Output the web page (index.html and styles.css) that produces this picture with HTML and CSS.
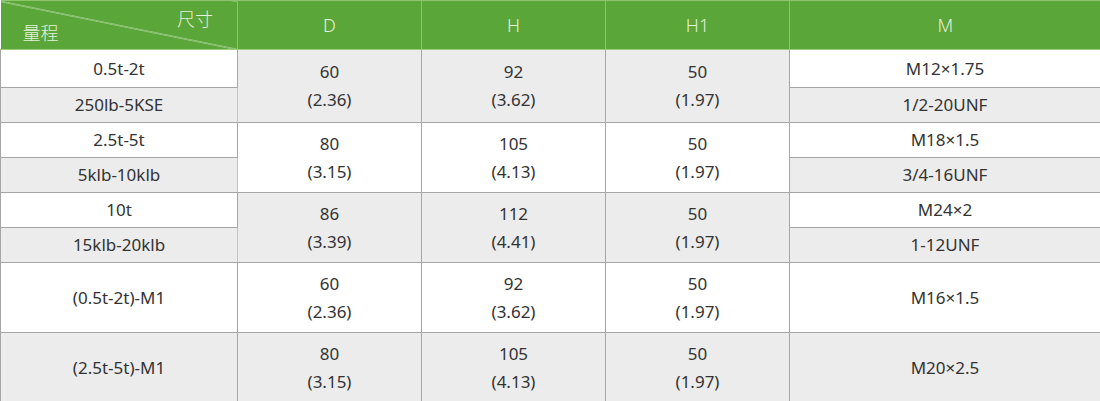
FILE: index.html
```html
<!DOCTYPE html>
<html lang="zh">
<head>
<meta charset="utf-8">
<title>尺寸表</title>
<link rel="stylesheet" href="styles.css">
</head>
<body>
<table class="spec">
  <colgroup>
    <col class="c-range">
    <col class="c-dim">
    <col class="c-dim">
    <col class="c-dim">
    <col class="c-m">
  </colgroup>
  <thead>
    <tr class="head">
      <th class="corner">
        <div class="corner-in">
          <span class="lbl-top">尺寸</span>
          <span class="lbl-bot">量程</span>
        </div>
      </th>
      <th>D</th>
      <th>H</th>
      <th>H1</th>
      <th>M</th>
    </tr>
  </thead>
  <tbody>
    <tr class="r-first">
      <td class="w">0.5t-2t</td>
      <td class="g two" rowspan="2">60<br>(2.36)</td>
      <td class="g two" rowspan="2">92<br>(3.62)</td>
      <td class="g two" rowspan="2">50<br>(1.97)</td>
      <td class="w">M12×1.75</td>
    </tr>
    <tr class="r-sub">
      <td class="g sub">250lb-5KSE</td>
      <td class="g sub">1/2-20UNF</td>
    </tr>
    <tr class="r-half">
      <td class="w">2.5t-5t</td>
      <td class="w two" rowspan="2">80<br>(3.15)</td>
      <td class="w two" rowspan="2">105<br>(4.13)</td>
      <td class="w two" rowspan="2">50<br>(1.97)</td>
      <td class="w">M18×1.5</td>
    </tr>
    <tr class="r-sub">
      <td class="g sub">5klb-10klb</td>
      <td class="g sub">3/4-16UNF</td>
    </tr>
    <tr class="r-half">
      <td class="w">10t</td>
      <td class="g two" rowspan="2">86<br>(3.39)</td>
      <td class="g two" rowspan="2">112<br>(4.41)</td>
      <td class="g two" rowspan="2">50<br>(1.97)</td>
      <td class="w">M24×2</td>
    </tr>
    <tr class="r-sub">
      <td class="g sub">15klb-20klb</td>
      <td class="g sub">1-12UNF</td>
    </tr>
    <tr class="r-full">
      <td class="w">(0.5t-2t)-M1</td>
      <td class="w two">60<br>(2.36)</td>
      <td class="w two">92<br>(3.62)</td>
      <td class="w two">50<br>(1.97)</td>
      <td class="w">M16×1.5</td>
    </tr>
    <tr class="r-full">
      <td class="g">(2.5t-5t)-M1</td>
      <td class="g two">80<br>(3.15)</td>
      <td class="g two">105<br>(4.13)</td>
      <td class="g two">50<br>(1.97)</td>
      <td class="g">M20×2.5</td>
    </tr>
  </tbody>
</table>
</body>
</html>
```
FILE: styles.css
```css
html, body {
  margin: 0;
  padding: 0;
  background: #ffffff;
}

.spec {
  width: 1100px;
  border-collapse: collapse;
  table-layout: fixed;
  font-family: "Noto Sans", "Open Sans", "Noto Sans CJK SC", sans-serif;
  font-size: 17px;
  color: #333333;
}

.c-range { width: 237px; }
.c-dim { width: 184px; }
.c-m { width: 311px; }

.head th {
  height: 48px;
  padding: 0;
  background: #5aa638;
  color: #e4f1dc;
  font-weight: 300;
  font-size: 18px;
  text-align: center;
  vertical-align: middle;
  border-left: 1px solid #8cc56c;
  border-top: 1px solid #8cc56c;
  border-bottom: 1px solid #9acd7c;
}

.head th.corner {
  border-left: none;
  vertical-align: top;
  background-color: #5aa638;
  background-image: linear-gradient(to top right,
    transparent calc(50% - 0.8px),
    #cfe6c2 50%,
    transparent calc(50% + 0.8px));
}

.corner-in {
  padding: 10px 24px 0 22px;
  font-family: "Noto Sans CJK SC", sans-serif;
  font-size: 18px;
  line-height: 14px;
}

.lbl-top {
  display: block;
  text-align: right;
}

.lbl-bot {
  display: block;
  text-align: left;
}

.spec td {
  padding: 0;
  text-align: center;
  vertical-align: middle;
  line-height: 28px;
  border: 1px solid #a6a6a6;
  border-left-color: #c4c4c4;
}

.spec td:first-child { border-left-color: #a6a6a6; }
.spec td.sub { border-top-color: #c8c8c8; }

.w { background: #ffffff; }
.g { background: #ececec; }

.r-first td { height: 37px; }
.r-half td { height: 34px; }
.r-sub td { height: 34px; }
.r-full td { height: 69px; }
.spec td.two { height: auto; }
```
